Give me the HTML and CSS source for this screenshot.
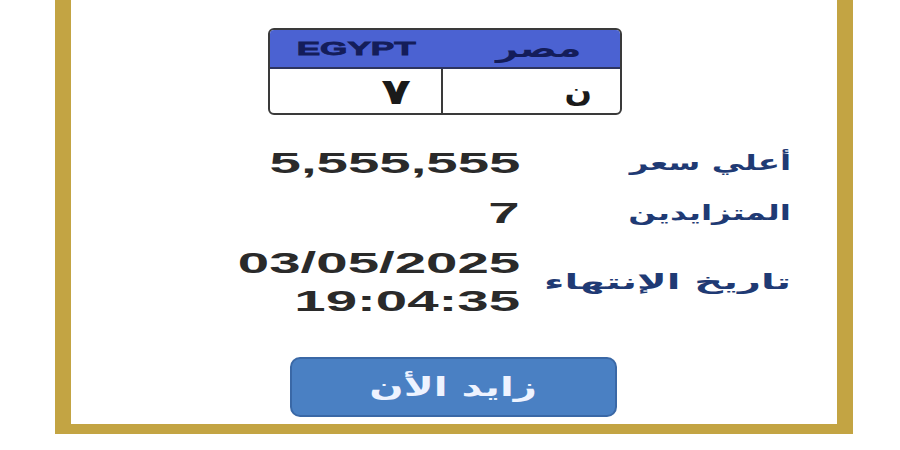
FILE: index.html
```html
<!DOCTYPE html>
<html lang="ar">
<head>
<meta charset="utf-8">
<title>لوحة مصر</title>
<link rel="stylesheet" href="styles.css">
</head>
<body>
<div class="card">
  <div class="plate">
    <div class="plate-head">
      <div class="head-cell"><span class="egypt">EGYPT</span></div>
      <div class="head-cell"><span class="misr">مصر</span></div>
    </div>
    <div class="plate-body">
      <div class="cell cell-num"><span class="glyph">٧</span></div>
      <div class="cell cell-letter"><span class="glyph letter">ن</span></div>
    </div>
  </div>

  <div class="details">
    <div class="value"><span class="num">5,555,555</span></div>
    <div class="label"><span class="lab">أعلي سعر</span></div>

    <div class="value"><span class="num">7</span></div>
    <div class="label"><span class="lab">المتزايدين</span></div>

    <div class="value tall"><span class="num">03/05/2025</span><br><span class="num">19:04:35</span></div>
    <div class="label"><span class="lab lab-wide">تاريخ الإنتهاء</span></div>
  </div>

  <div class="btn"><span class="btn-text">زايد الأن</span></div>
</div>
</body>
</html>
```
FILE: styles.css
```css
html, body {
  margin: 0;
  padding: 0;
  background: #ffffff;
}
body {
  width: 900px;
  height: 450px;
  overflow: hidden;
  font-family: "Liberation Sans", Arial, sans-serif;
}
.card {
  margin-left: 55px;
  width: 766px;
  border-left: 16px solid #c3a443;
  border-right: 16px solid #c3a443;
  border-bottom: 10px solid #c3a443;
  padding-top: 28px;
  padding-bottom: 7px;
  background: #ffffff;
}
.plate {
  margin-left: 197px;
  width: 350px;
  border: 2px solid #3a3a3a;
  border-radius: 6px;
  overflow: hidden;
}
.plate-head {
  display: grid;
  grid-template-columns: 173px 177px;
  height: 37px;
  background: #4b62d2;
  border-bottom: 2px solid #2d3460;
}
.head-cell {
  display: flex;
  align-items: center;
  justify-content: center;
}
.egypt {
  display: inline-block;
  font-weight: bold;
  font-size: 19px;
  color: #141d5a;
  -webkit-text-stroke: 0.8px #141d5a;
  transform: scaleX(1.85);
}
.misr {
  display: inline-block;
  font-family: "DejaVu Sans", sans-serif;
  font-weight: bold;
  font-size: 24px;
  color: #141d5a;
  transform: scaleX(1.6);
  margin-left: 14px;
}
.plate-body {
  display: grid;
  grid-template-columns: 173px 177px;
  height: 44px;
}
.cell {
  display: flex;
  align-items: center;
  justify-content: flex-end;
}
.cell-num {
  border-right: 2px solid #3a3a3a;
  padding-right: 30px;
}
.cell-letter {
  padding-right: 28px;
}
.glyph {
  display: inline-block;
  font-family: "DejaVu Sans", sans-serif;
  font-weight: bold;
  font-size: 36px;
  color: #1a1a1a;
  transform: scaleX(1.35);
  transform-origin: 100% 50%;
}
.letter {
  font-size: 28px;
  transform: scaleX(1.15);
}
.details {
  display: grid;
  grid-template-columns: 449px 250px;
  grid-template-rows: 38px 38px 76px;
  column-gap: 21px;
  row-gap: 12px;
  margin-top: 29px;
  align-items: center;
}
.value {
  text-align: right;
  font-weight: bold;
  font-size: 30px;
  line-height: 38px;
  color: #2a2a2a;
}
.num {
  display: inline-block;
  transform: scaleX(1.88);
  transform-origin: 100% 50%;
}
.label {
  direction: rtl;
  text-align: right;
  font-family: "DejaVu Sans", sans-serif;
  font-weight: bold;
  font-size: 21px;
  line-height: 38px;
  color: #1f3a74;
}
.lab {
  display: inline-block;
  transform: scaleX(1.55);
  transform-origin: 100% 50%;
}
.lab-wide {
  transform: scaleX(1.9);
}
.btn {
  margin-top: 37px;
  margin-left: 219px;
  width: 323px;
  height: 56px;
  background: #4a80c3;
  border: 2px solid #3a68a6;
  border-radius: 10px;
  display: flex;
  align-items: center;
  justify-content: center;
}
.btn-text {
  display: inline-block;
  font-family: "DejaVu Sans", sans-serif;
  font-weight: bold;
  font-size: 26px;
  color: #eef3ff;
  transform: scaleX(1.55);
}
```
